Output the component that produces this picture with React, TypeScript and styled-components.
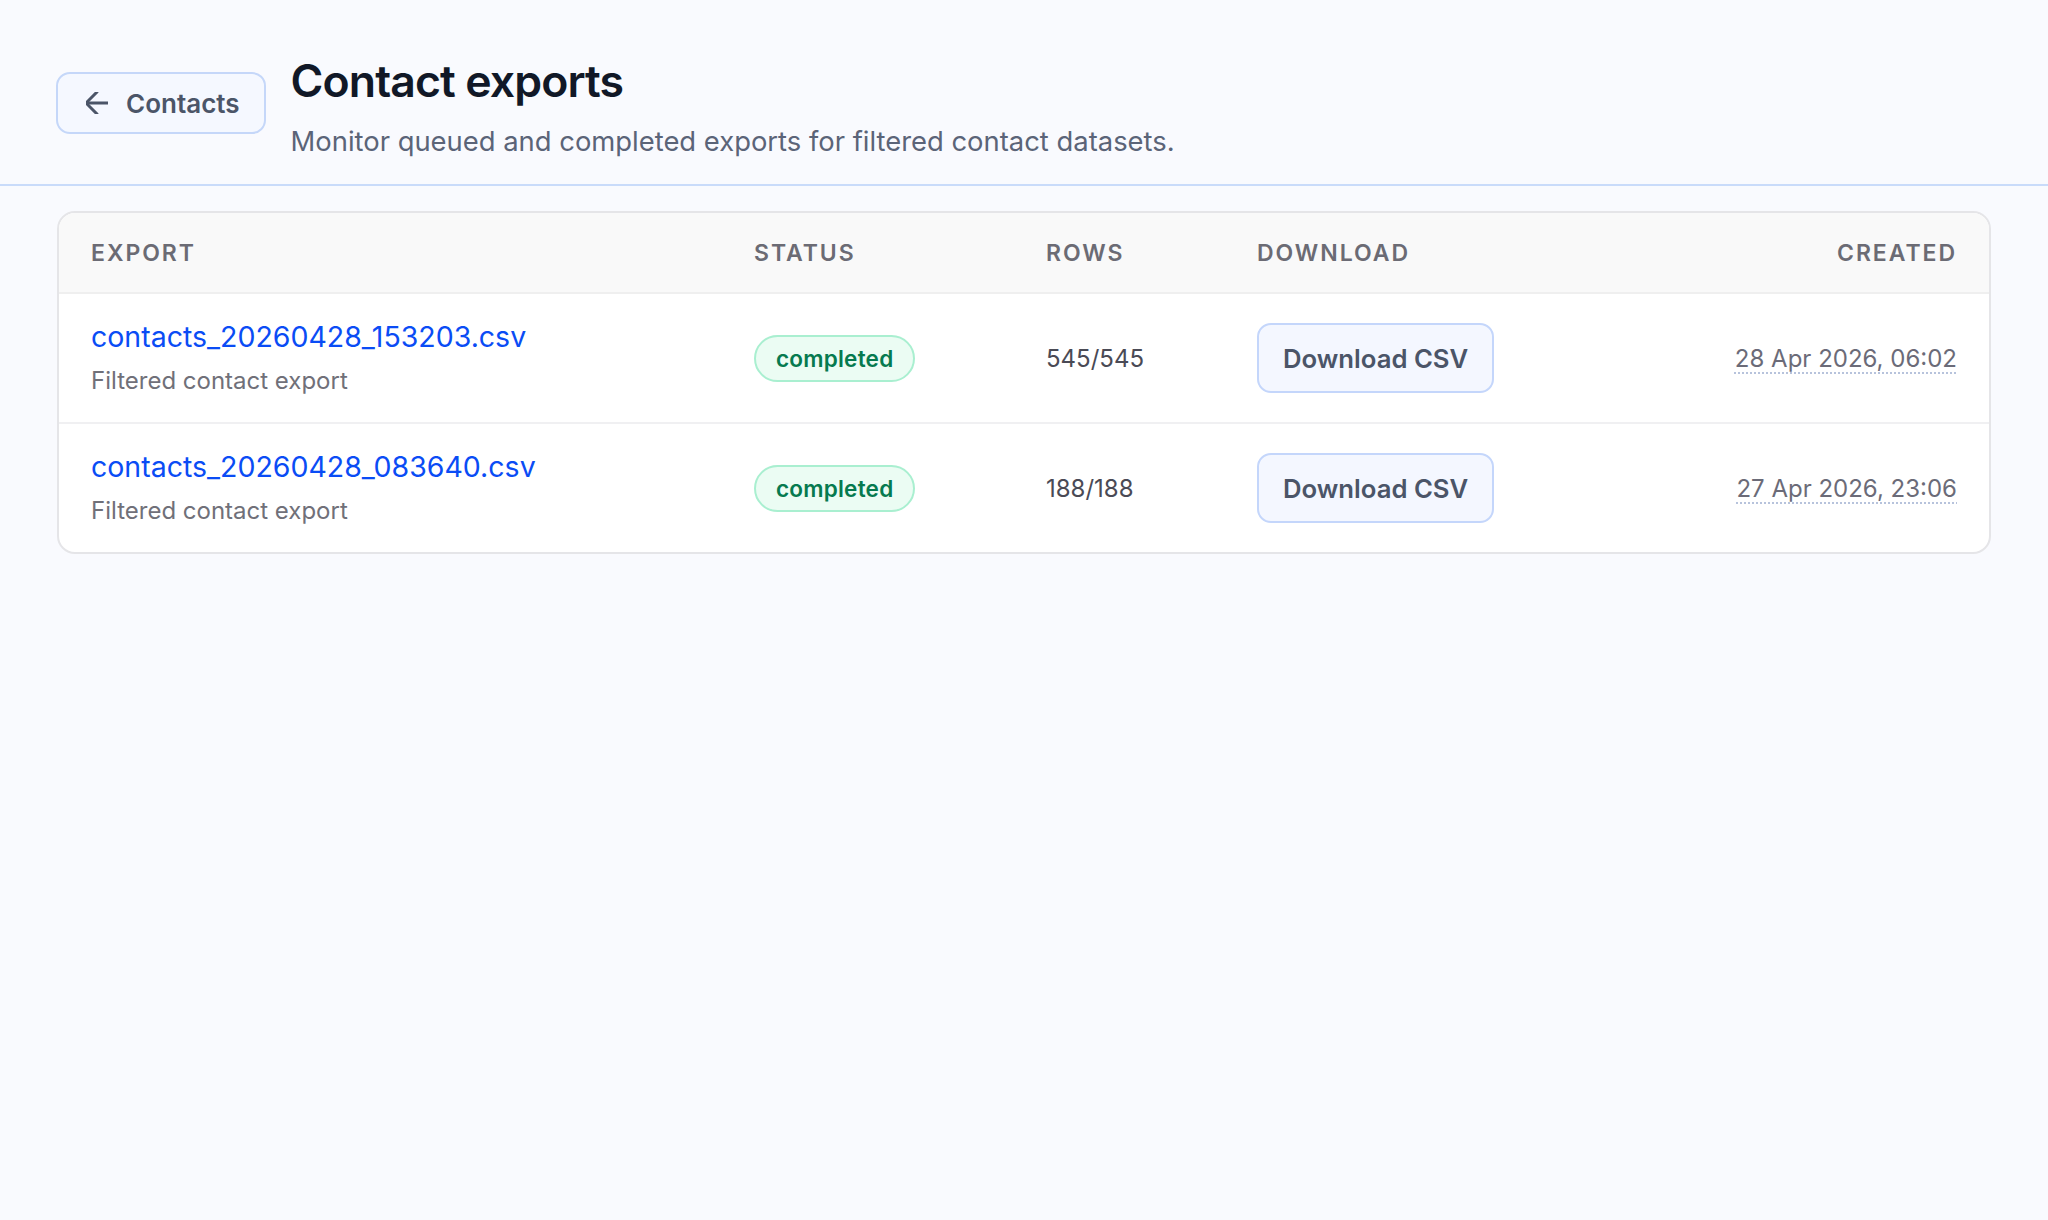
import * as React from 'react';
import styled, { createGlobalStyle } from 'styled-components';

const GlobalStyle = createGlobalStyle`
  html, body {
    margin: 0;
    padding: 0;
    background: #f9fafe;
    font-family: Inter, 'Noto Sans', 'Liberation Sans', sans-serif;
    -webkit-font-smoothing: antialiased;
  }
`;

type ExportRow = {
  file: string;
  note: string;
  status: string;
  rows: string;
  created: string;
};

const exportsList: ExportRow[] = [
  {
    file: 'contacts_20260428_153203.csv',
    note: 'Filtered contact export',
    status: 'completed',
    rows: '545/545',
    created: '28 Apr 2026, 06:02',
  },
  {
    file: 'contacts_20260428_083640.csv',
    note: 'Filtered contact export',
    status: 'completed',
    rows: '188/188',
    created: '27 Apr 2026, 23:06',
  },
];

const Page = styled.div`
  min-height: 1220px;
  background: #f9fafe;
`;

const Header = styled.header`
  display: flex;
  align-items: flex-start;
  gap: 25px;
  padding: 55px 56px 25px;
  border-bottom: 2px solid #c9dbfa;
`;

const BackButton = styled.button`
  display: flex;
  align-items: center;
  gap: 18px;
  height: 62px;
  margin-top: 17px;
  padding: 0 24px 0 28px;
  border: 2px solid #c5d7f9;
  border-radius: 14px;
  background: #f5f8ff;
  color: #4b5568;
  font-family: inherit;
  font-size: 26px;
  font-weight: 600;
  cursor: pointer;
`;

const TitleBlock = styled.div`
  display: flex;
  flex-direction: column;
`;

const Title = styled.h1`
  margin: 0;
  font-size: 44.6px;
  line-height: 52px;
  font-weight: 600;
  letter-spacing: -0.02em;
  color: #111827;
`;

const Subtitle = styled.p`
  margin: 16px 0 0;
  font-size: 27.4px;
  line-height: 36px;
  color: #5b6478;
`;

const Content = styled.main`
  padding: 25px 57px;
`;

const Card = styled.div`
  background: #ffffff;
  border: 2px solid #e5e5e8;
  border-radius: 18px;
  overflow: hidden;
`;

const Table = styled.table`
  width: 100%;
  border-collapse: collapse;
  table-layout: fixed;
`;

const HeadRow = styled.tr`
  background: #f9f9f9;
  border-bottom: 2px solid #efefef;
`;

const HeadCell = styled.th<{ $align?: 'left' | 'right' }>`
  height: 79px;
  padding: 0 32px;
  text-align: ${p => p.$align || 'left'};
  font-size: 23px;
  font-weight: 600;
  letter-spacing: 0.085em;
  text-transform: uppercase;
  color: #6b6b74;
`;

const BodyRow = styled.tr`
  & + & {
    border-top: 2px solid #f0f0f2;
  }
`;

const Cell = styled.td<{ $align?: 'left' | 'right' }>`
  height: 128px;
  padding: 0 32px;
  vertical-align: middle;
  text-align: ${p => p.$align || 'left'};
`;

const FileLink = styled.a`
  display: block;
  font-size: 28.5px;
  line-height: 34px;
  color: #0a4cf5;
  text-decoration: none;
`;

const Note = styled.div`
  margin-top: 12px;
  font-size: 24px;
  line-height: 30px;
  color: #707079;
`;

const StatusPill = styled.span`
  display: inline-flex;
  align-items: center;
  height: 47px;
  padding: 0 20px;
  box-sizing: border-box;
  border: 2px solid #a9efd0;
  border-radius: 24px;
  background: #ebfcf3;
  color: #067a4f;
  font-size: 22.5px;
  font-weight: 600;
  letter-spacing: 0.01em;
`;

const RowCount = styled.span`
  font-size: 24px;
  color: #4a4a55;
`;

const DownloadButton = styled.button`
  height: 70px;
  padding: 0 24px;
  border: 2px solid #c4d6fb;
  border-radius: 14px;
  background: #f4f7ff;
  color: #4b5568;
  font-family: inherit;
  font-size: 25.7px;
  font-weight: 600;
  cursor: pointer;
`;

const CreatedAt = styled.time`
  font-size: 24px;
  color: #6b6b78;
  text-decoration: underline dotted #b7c3dc;
  text-decoration-thickness: 2px;
  text-underline-offset: 6px;
`;

const ArrowLeft = () => (
  <svg width="22" height="22" viewBox="5 5 14 14" fill="none" stroke="currentColor" strokeWidth="1.9" strokeLinecap="round" strokeLinejoin="round">
    <path d="m12 19-7-7 7-7" />
    <path d="M19 12H5" />
  </svg>
);

export default function App() {
  return (
    <Page>
      <GlobalStyle />
      <Header>
        <BackButton>
          <ArrowLeft />
          Contacts
        </BackButton>
        <TitleBlock>
          <Title>Contact exports</Title>
          <Subtitle>Monitor queued and completed exports for filtered contact datasets.</Subtitle>
        </TitleBlock>
      </Header>
      <Content>
        <Card>
          <Table>
            <colgroup>
              <col style={{ width: 663 }} />
              <col style={{ width: 292 }} />
              <col style={{ width: 211 }} />
              <col style={{ width: 400 }} />
              <col />
            </colgroup>
            <thead>
              <HeadRow>
                <HeadCell>Export</HeadCell>
                <HeadCell>Status</HeadCell>
                <HeadCell>Rows</HeadCell>
                <HeadCell>Download</HeadCell>
                <HeadCell $align="right">Created</HeadCell>
              </HeadRow>
            </thead>
            <tbody>
              {exportsList.map(row => (
                <BodyRow key={row.file}>
                  <Cell>
                    <FileLink href="#">{row.file}</FileLink>
                    <Note>{row.note}</Note>
                  </Cell>
                  <Cell>
                    <StatusPill>{row.status}</StatusPill>
                  </Cell>
                  <Cell>
                    <RowCount>{row.rows}</RowCount>
                  </Cell>
                  <Cell>
                    <DownloadButton>Download CSV</DownloadButton>
                  </Cell>
                  <Cell $align="right">
                    <CreatedAt>{row.created}</CreatedAt>
                  </Cell>
                </BodyRow>
              ))}
            </tbody>
          </Table>
        </Card>
      </Content>
    </Page>
  );
}
